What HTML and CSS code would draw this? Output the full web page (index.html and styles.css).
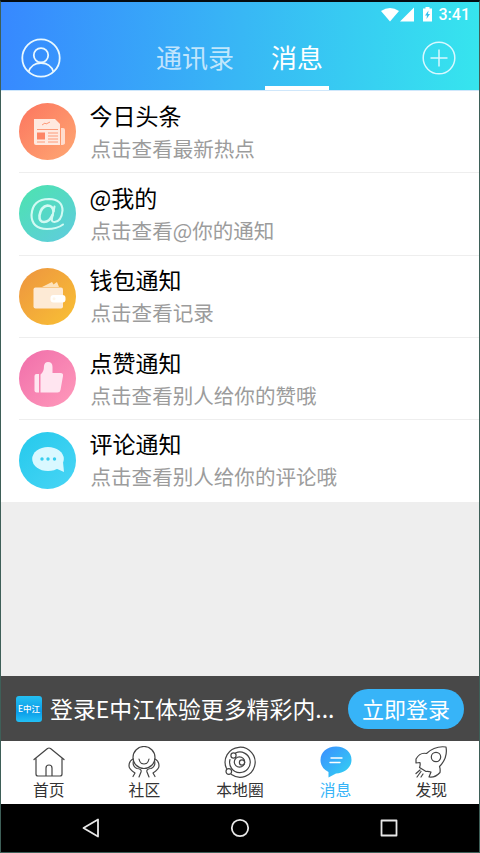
FILE: index.html
```html
<!DOCTYPE html>
<html lang="zh-CN">
<head>
<meta charset="utf-8">
<title>消息</title>
<link rel="stylesheet" href="styles.css">
</head>
<body>
<div class="screen">
  <header class="header">
    <div class="status">
      <svg class="status-icons" viewBox="0 0 56 16">
        <path d="M0 4Q9-2 18 4L9 14.500Z" fill="#fff"/>
        <path d="M33 .500V14.500H19Z" fill="#fff"/>
        <path d="M44.500 0h4v1.500h2.500V14.500h-9V1.500H44.500Z" fill="#fff"/>
        <path d="M47.500 3.500 44 8.500h2L45.500 12l3.500-5h-2Z" fill="#37c0ee"/>
      </svg>
      <span class="clock">3:41</span>
    </div>
    <div class="nav">
      <svg class="profile" viewBox="0 0 40 40" fill="none" stroke="#e8f8ff" stroke-width="1.800">
        <circle cx="20" cy="20" r="18.700"/><circle cx="20" cy="17.300" r="7.200"/><path d="M7.500 34C11 22 29 22 32.500 34"/>
      </svg>
      <div class="tabs"><span class="tab">通讯录</span><span class="tab current">消息</span></div>
      <svg class="add" viewBox="0 0 34 34" fill="none" stroke="#d9f8ff" stroke-width="1.500">
        <circle cx="17" cy="17" r="15.800"/><path d="M17 8.500v17M8.500 17h17"/>
      </svg>
    </div>
  </header>
  <main class="list">
    <div class="row">
      <svg class="icon" viewBox="0 0 57 57">
        <defs><linearGradient id="g1" x1="0" y1="0" x2="1" y2="1"><stop stop-color="#fc755f"/><stop offset="1" stop-color="#fea873"/></linearGradient></defs>
        <circle cx="28.500" cy="28.500" r="28.500" fill="url(#g1)"/>
        <path d="M15 16h21l5 5v21H17q-2 0-2-2Z" fill="#ffe9df"/>
        <path d="M42 25h2q2 0 2 2V40q0 2-4 2Z" fill="#ffdccd"/>
        <path d="M18 29.500h8v7h-8Z" fill="#fd8565"/>
        <path d="M18 26.500h21M29 30h10M29 33h10M29 36h10M18 39h8M29 39h10M23 22l3-2 1 1 4-2" fill="none" stroke="#fd9a78"/>
      </svg>
      <div class="copy"><div class="title">今日头条</div><div class="sub">点击查看最新热点</div></div>
    </div>
    <div class="row">
      <svg class="icon" viewBox="0 0 57 57">
        <defs><linearGradient id="g2" x1=".2" y1=".1" x2=".8" y2=".9"><stop stop-color="#4fe0b5"/><stop offset="1" stop-color="#5dcfd8"/></linearGradient></defs>
        <circle cx="28.500" cy="28.500" r="28.500" fill="url(#g2)"/>
        <g fill="none" stroke="#d2faf3" stroke-linecap="round" stroke-linejoin="round">
          <path d="M44 39.500Q38 44 28 44Q12.500 43.500 12.500 30Q13.500 14 30 14Q43.500 14.500 43.500 25.500Q42.500 36.500 35.500 37Q32 37 33 33L35.500 21.500" stroke-width="2.100"/>
          <path d="M34.500 26Q33.500 20.500 28.500 20.500Q22 21.500 20.500 30.500Q20 37 25 37Q30.500 37 33.500 30" stroke-width="2.600"/>
        </g>
      </svg>
      <div class="copy"><div class="title">@我的</div><div class="sub">点击查看@你的通知</div></div>
    </div>
    <div class="row">
      <svg class="icon" viewBox="0 0 57 57">
        <defs><linearGradient id="g3" x1="0" y1="0" x2="1" y2="1"><stop stop-color="#ed9440"/><stop offset="1" stop-color="#f9c134"/></linearGradient></defs>
        <circle cx="28.500" cy="28.500" r="28.500" fill="url(#g3)"/>
        <path d="M23 19 33 14l1.500 2.500L38 14l2 5Z" fill="#fde3bd"/>
        <rect x="14.500" y="19.500" width="29.500" height="21" rx="2" fill="#fdead5"/>
        <rect x="31.500" y="27" width="15" height="7.500" rx="3" fill="#fff"/><circle cx="35" cy="30.700" r="1.500" fill="#fff6e8"/>
      </svg>
      <div class="copy"><div class="title">钱包通知</div><div class="sub">点击查看记录</div></div>
    </div>
    <div class="row">
      <svg class="icon" viewBox="0 0 57 57">
        <defs><linearGradient id="g4" x1="0" y1="0" x2="1" y2="1"><stop stop-color="#f06eaa"/><stop offset="1" stop-color="#ff9abb"/></linearGradient></defs>
        <circle cx="28.500" cy="28.500" r="28.500" fill="url(#g4)"/>
        <path d="M17.500 24H20V42.500H17.500Q15.500 42.500 15.500 40.500V26Q15.500 24 17.500 24Z" fill="#ffe5f0"/>
        <path d="M21.500 24.500Q25 22 25 16Q25.500 12 29 12Q33.500 12 33.500 17V23H41.500Q44.500 23 44 26L41.500 40Q41 42.500 38.500 42.500H21.500Z" fill="#ffe5f0"/>
      </svg>
      <div class="copy"><div class="title">点赞通知</div><div class="sub">点击查看别人给你的赞哦</div></div>
    </div>
    <div class="row">
      <svg class="icon" viewBox="0 0 57 57">
        <defs><linearGradient id="g5" x1="0" y1="0" x2="1" y2="1"><stop stop-color="#25c9ec"/><stop offset="1" stop-color="#49d5f5"/></linearGradient></defs>
        <circle cx="28.500" cy="28.500" r="28.500" fill="url(#g5)"/>
        <ellipse cx="29" cy="27" rx="15.800" ry="12" fill="#d9f8ff"/><path d="M36 36 45 40 44 30Z" fill="#d9f8ff"/>
        <g fill="#36cdef"><circle cx="23" cy="27" r="1.700"/><circle cx="29" cy="27" r="1.700"/><circle cx="35.500" cy="27" r="1.700"/></g>
      </svg>
      <div class="copy"><div class="title">评论通知</div><div class="sub">点击查看别人给你的评论哦</div></div>
    </div>
  </main>
  <div class="banner">
    <div class="logo">E中江</div>
    <div class="message">登录E中江体验更多精彩内...</div>
    <div class="login">立即登录</div>
  </div>
  <nav class="tabbar">
    <div class="item">
      <svg class="glyph" viewBox="0 0 32 32"><path d="M1 13.500 14.500 2.500Q16 1.500 17.500 2.500L31 13.500M3 12.500V28Q3 30 5 30H27Q29 30 29 28V12.500M13 29.500V22Q13 19 16 19T19 22V29.500"/></svg>
      <span>首页</span>
    </div>
    <div class="item">
      <svg class="glyph" viewBox="0 0 32 32"><circle cx="16" cy="11.500" r="11"/><path d="M11 13Q12 18 16 18T21 13M5 13Q1 15 1 20Q1 23 7 27L5 30.500M27 13Q31 15 31 20Q31 23 25 27L27 30.500M5.500 15Q4 20 9 22.500Q14 23 13 26L11 31M26.500 15Q28 20 23 22.500Q18 23 19 26L21 31"/></svg>
      <span>社区</span>
    </div>
    <div class="item">
      <svg class="glyph" viewBox="0 0 32 32"><path d="M2.500 22.500A15 15 0 1 1 7.500 28.500M11.500 7A10.300 10.300 0 1 1 6 13.500"/><circle cx="4.800" cy="25.500" r="2.800"/><circle cx="9.500" cy="9.500" r="2.600"/><circle cx="15.500" cy="16" r="5.200"/><circle cx="18" cy="16.500" r="2.600"/></svg>
      <span>本地圈</span>
    </div>
    <div class="item active">
      <svg class="glyph" viewBox="0 0 32 32"><defs><linearGradient id="g6" x1="0" y1="0" x2="1" y2="1"><stop stop-color="#3b8dff"/><stop offset="1" stop-color="#32d5f2"/></linearGradient></defs><path d="M16 .500C25 .500 31.500 6 31.500 14S24 27 16 27.500L8.500 31.500V26Q.500 22 .500 14C.500 6 7 .500 16 .500Z" fill="url(#g6)" stroke="none"/><path d="M11 12h11M10 16.500h10" stroke="#fff" stroke-width="1.400"/></svg>
      <span>消息</span>
    </div>
    <div class="item">
      <svg class="glyph" viewBox="0 0 32 32"><path d="M31 1Q20-.500 11.500 7.500Q5 6 1 13V17L5 16.500Q5.500 19 4.500 21.500L11 25.500Q13 25 16 26L14 31Q20 32 25 26.500Q25.500 23 24.500 20.500Q33 12 31 1ZM1 27.500l4-3.500M2 31l4-5.500M6 31l2-3"/><circle cx="21" cy="11" r="4.700"/></svg>
      <span>发现</span>
    </div>
  </nav>
  <div class="system">
    <svg viewBox="0 0 20 20"><path d="M17 1.500V18.500L2.500 10Z"/></svg>
    <svg viewBox="0 0 20 20"><circle cx="10" cy="10" r="8.200"/></svg>
    <svg viewBox="0 0 20 20"><rect x="2.500" y="2.500" width="15" height="15"/></svg>
  </div>
</div>
</body>
</html>
```
FILE: styles.css
```css
* { box-sizing: border-box; }
body { margin: 0; font-family: "Noto Sans CJK SC", sans-serif; }
.screen { width: 480px; height: 853px; display: flex; flex-direction: column; background: #eee; border: 1px solid #3e5f58; border-top: 2px solid #050b10; overflow: hidden; }
.header { height: 88px; flex: none; background: linear-gradient(94deg, #3788ff, #38b7f5 50%, #36e5ee); }
.status { height: 25px; display: flex; justify-content: flex-end; align-items: center; padding-right: 9px; gap: 2px; color: #fff; }
.status-icons { width: 56px; height: 16px; }
.clock { font: 500 16px/24px Roboto, sans-serif; }
.nav { height: 63px; display: flex; justify-content: space-between; padding: 0 23px 0 20px; }
.profile { width: 40px; height: 40px; margin-top: 11px; }
.add { width: 34px; height: 34px; margin-top: 14px; }
.tabs { display: flex; gap: 25px; margin-right: 4px; }
.tab { width: 90px; text-align: center; font-size: 26px; line-height: 60px; height: 63px; color: rgba(255,255,255,.7); }
.tab.current { width: 64px; color: #fff; border-bottom: 4px solid #fff; }
.list { flex: none; height: 412px; background: #fff; border-top: 1px solid #cfe7fb; display: grid; grid-template-rows: repeat(5, 82.300px); padding-left: 18px; }
.row { display: flex; align-items: center; gap: 13.500px; border-bottom: 1px solid #eee; }
.row:last-child { border-bottom: 0; height: 80.400px; }
.icon { width: 57px; height: 57px; flex: none; }
.title { font-size: 23px; line-height: 32px; color: #000; }
.sub { font-size: 20.550px; line-height: 34px; color: #9c9c9c; padding-left: 1px; }
.banner { flex: none; margin-top: auto; height: 65px; background: #484848; color: #fff; display: flex; align-items: center; padding: 0 15px; }
.logo { width: 26px; height: 26px; border-radius: 3px; background: linear-gradient(#25c0f2, #0a9be8 60%, #22c0f5); font-size: 8.500px; font-weight: 500; line-height: 25px; text-align: center; white-space: nowrap; }
.message { flex: 1; margin-left: 8px; font-size: 22.900px; line-height: 34px; padding-bottom: 2px; white-space: nowrap; }
.login { width: 116px; height: 40px; border-radius: 20px; background: #37b4f8; text-align: center; font-size: 22px; line-height: 39px; }
.tabbar { flex: none; height: 63px; background: #fff; display: grid; grid-template-columns: repeat(5, 1fr); }
.item { display: flex; flex-direction: column; align-items: center; padding-top: 5px; color: #333; font-size: 15.800px; line-height: 23px; }
.glyph { width: 32px; height: 32px; fill: none; stroke: #444; stroke-width: 1.200; stroke-linecap: round; stroke-linejoin: round; }
.active { color: #37b4f8; }
.system { flex: none; height: 48px; background: #000; display: flex; justify-content: space-between; padding: 14px 80px; }
.system svg { width: 20px; height: 20px; fill: none; stroke: #e8e8e8; stroke-width: 1.800; stroke-linejoin: round; }
```
